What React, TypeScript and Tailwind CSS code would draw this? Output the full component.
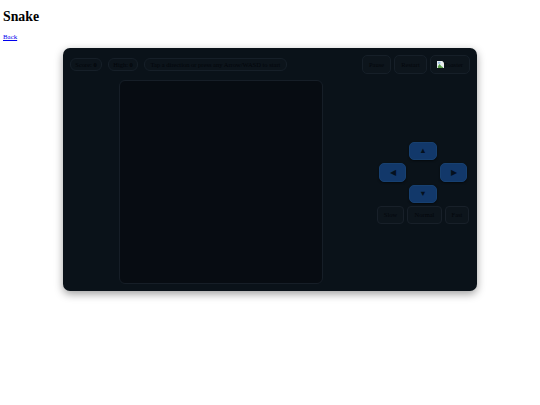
export default function App() {
  const pill = "h-[13px] flex items-center rounded-[6px] border border-[#161f28] bg-[#0c141b] text-[6.5px] text-[#02050a] whitespace-nowrap";
  const btn = "h-[19px] flex items-center justify-center rounded-[5px] border border-[#161f28] bg-[#0d151c] text-[6.5px] text-[#03060b] whitespace-nowrap";
  const dir = "flex items-center justify-center rounded-[5px] border border-[#174070] bg-[#12386a] text-[7.5px] text-[#04101e] shadow-[0_1px_2px_rgba(0,0,0,0.5)]";
  const speed = "h-[18px] flex items-center justify-center rounded-[4px] border border-[#182029] bg-[#0d151c] text-[6.5px] text-[#03060b]";
  return (
    <div className="min-h-[405px] bg-white px-[3px] font-['Liberation_Serif',serif] text-black">
      <h1 className="pt-[9px] text-[13.8px] font-bold leading-[16px]">Snake</h1>
      <a href="#" className="mt-[8px] block text-[6.9px] leading-[8px] text-[#0000ee] underline">Back</a>
      <div className="mx-auto mt-[7px] flex h-[243px] w-[414px] flex-col gap-[6px] rounded-[7px] bg-[#0a1219] p-[7px] shadow-[0_3px_9px_rgba(0,0,0,0.38)]">
        <div className="flex h-[19px] items-center justify-between">
          <div className="flex items-center gap-[6px]">
            <div className={pill + " w-[32px] justify-center"}>Score: <b className="ml-[1.5px]">0</b></div>
            <div className={pill + " w-[30px] justify-center"}>High: <b className="ml-[1.5px]">0</b></div>
            <div className={pill + " w-[143px] justify-center"}>Tap a direction or press any Arrow/WASD to start</div>
          </div>
          <div className="flex items-center gap-[3px]">
            <div className={btn + " w-[29px]"}>Pause</div>
            <div className={btn + " w-[33px]"}>Restart</div>
            <div className={btn + " w-[40px]"}>
              <svg viewBox="0 0 8 8" className="h-[7px] w-[7px] shrink-0">
                <path d="M0 0H6L8 2V8H0Z" fill="#e8eef0" />
                <path d="M1 6L3 3.5L5 6L7 7V8H1Z" fill="#5da04a" />
                <rect x="1" y="1" width="3" height="2" fill="#9cc0e8" />
              </svg>
              <span>Toaster</span>
            </div>
          </div>
        </div>
        <div className="flex gap-[4px]">
          <div className="flex flex-1 justify-center">
            <div className="h-[204px] w-[204px] rounded-[6px] border border-[#161e27] bg-[#070c12]" />
          </div>
          <div className="flex w-[94px] flex-col items-center justify-center gap-[3px] pt-[2px]">
            <div className="grid grid-cols-[27px_28px_27px] grid-rows-[18px_19px_18px] gap-[3px]">
              <div className={dir + " col-start-2"}>▲</div>
              <div className={dir + " col-start-1 row-start-2"}>◀</div>
              <div className={dir + " col-start-3 row-start-2"}>▶</div>
              <div className={dir + " col-start-2 row-start-3"}>▼</div>
            </div>
            <div className="flex gap-[3px]">
              <div className={speed + " w-[27px]"}>Slow</div>
              <div className={speed + " w-[35px]"}>Normal</div>
              <div className={speed + " w-[24px]"}>Fast</div>
            </div>
          </div>
        </div>
      </div>
    </div>
  );
}
